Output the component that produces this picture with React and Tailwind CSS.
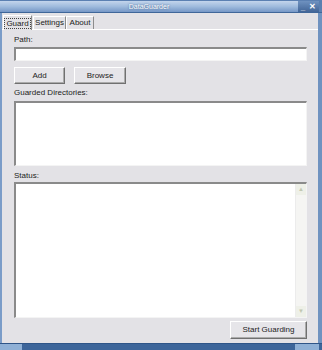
import React from 'react';

function Tab({ label, active, width }) {
  return (
    <div
      className={
        'flex items-center justify-center border-t border-l border-r border-t-white border-l-white border-r-[#8c8c8c] bg-[#e3e2e6] ' +
        (active ? 'h-[15px] -mb-px ' : 'h-[13px] ') +
        width
      }
    >
      <span className={active ? 'px-[1px] leading-[9px] border border-dotted border-[#444]' : ''}>{label}</span>
    </div>
  );
}

function Button({ children, className }) {
  return (
    <div
      className={
        'flex items-center justify-center bg-[#e6e5e9] border border-t-white border-l-white border-r-[#707070] border-b-[#707070] shadow-[inset_-1px_-1px_0_#ababab] ' +
        className
      }
    >
      {children}
    </div>
  );
}

function Field({ className, children }) {
  return (
    <div
      className={
        'bg-white border-t-2 border-l-2 border-t-[#8a8a8a] border-l-[#8a8a8a] border-r border-b border-r-[#f4f4f4] border-b-[#f4f4f4] ' +
        className
      }
    >
      {children}
    </div>
  );
}

export default function App() {
  return (
    <div
      className="w-[322px] h-[350px] flex flex-col bg-[#e3e2e6] text-[#222] text-[8px] overflow-hidden"
      style={{ fontFamily: '"Liberation Sans", Arial, sans-serif' }}
    >
      {/* title bar */}
      <div className="h-[13px] flex border-t border-[#5b80b2] bg-gradient-to-b from-[#c3d5ec] via-[#9fbbdd] to-[#7597c6] border-b border-b-[#3f6699]">
        <div className="flex-1 flex items-center justify-center text-white text-[7px] leading-none [text-shadow:0_0_2px_#2f4f7c]">
          DataGuarder
        </div>
        <div className="w-[21px] flex items-center justify-center gap-[4px] bg-gradient-to-b from-[#6f92c0] to-[#426597] text-white text-[8px] font-bold leading-none">
          <span className="mt-[2px]">_</span>
          <span>✕</span>
        </div>
        <div className="w-[3px] bg-[#5a7fb0]" />
      </div>

      <div className="flex-1 flex">
        <div className="w-[2px] bg-[#7a9cc8]" />
        <div className="flex-1 flex flex-col">
          {/* tabs */}
          <div className="h-[17px] flex items-end pl-[1px] border-b border-white">
            <Tab label="Guard" active width="w-[29px]" />
            <Tab label="Settings" width="w-[33px] ml-[1px]" />
            <Tab label="About" width="w-[28px]" />
          </div>

          <div className="flex-1 flex flex-col pl-[12px] pr-[11px] pt-[5px]">
            <div className="h-[10px] leading-[10px]">Path:</div>
            <Field className="mt-[2px] h-[14px]" />

            <div className="flex gap-[9px] mt-[6px]">
              <Button className="w-[51px] h-[17px]">Add</Button>
              <Button className="w-[52px] h-[17px]">Browse</Button>
            </div>

            <div className="h-[10px] leading-[10px] mt-[4px]">Guarded Directories:</div>
            <Field className="mt-[3px] h-[65px]" />

            <div className="h-[10px] leading-[10px] mt-[5px]">Status:</div>
            <Field className="mt-[1px] h-[136px] flex justify-end">
              <div className="w-[11px] h-full flex flex-col bg-[#f5f5f3] border-l border-[#ececec]">
                <div className="h-[11px] flex items-center justify-center text-[#c2c8b2] text-[6px] bg-[#eef0e8]">▲</div>
                <div className="flex-1" />
                <div className="h-[11px] flex items-center justify-center text-[#c2c8b2] text-[6px] bg-[#eef0e8]">▼</div>
              </div>
            </Field>

            <div className="flex justify-end mt-[3px]">
              <Button className="w-[77px] h-[18px]">Start Guarding</Button>
            </div>
          </div>
        </div>
        <div className="w-[4px] bg-[#6f92c0]" />
      </div>

      {/* bottom frame */}
      <div className="h-[7px] flex bg-[#3d659a] border-t border-[#2f5588]">
        <div className="w-[22px] bg-[#8fb0d6]" />
        <div className="flex-1" />
        <div className="w-[24px] bg-[#8fb0d6]" />
        <div className="w-[3px]" />
      </div>
    </div>
  );
}
